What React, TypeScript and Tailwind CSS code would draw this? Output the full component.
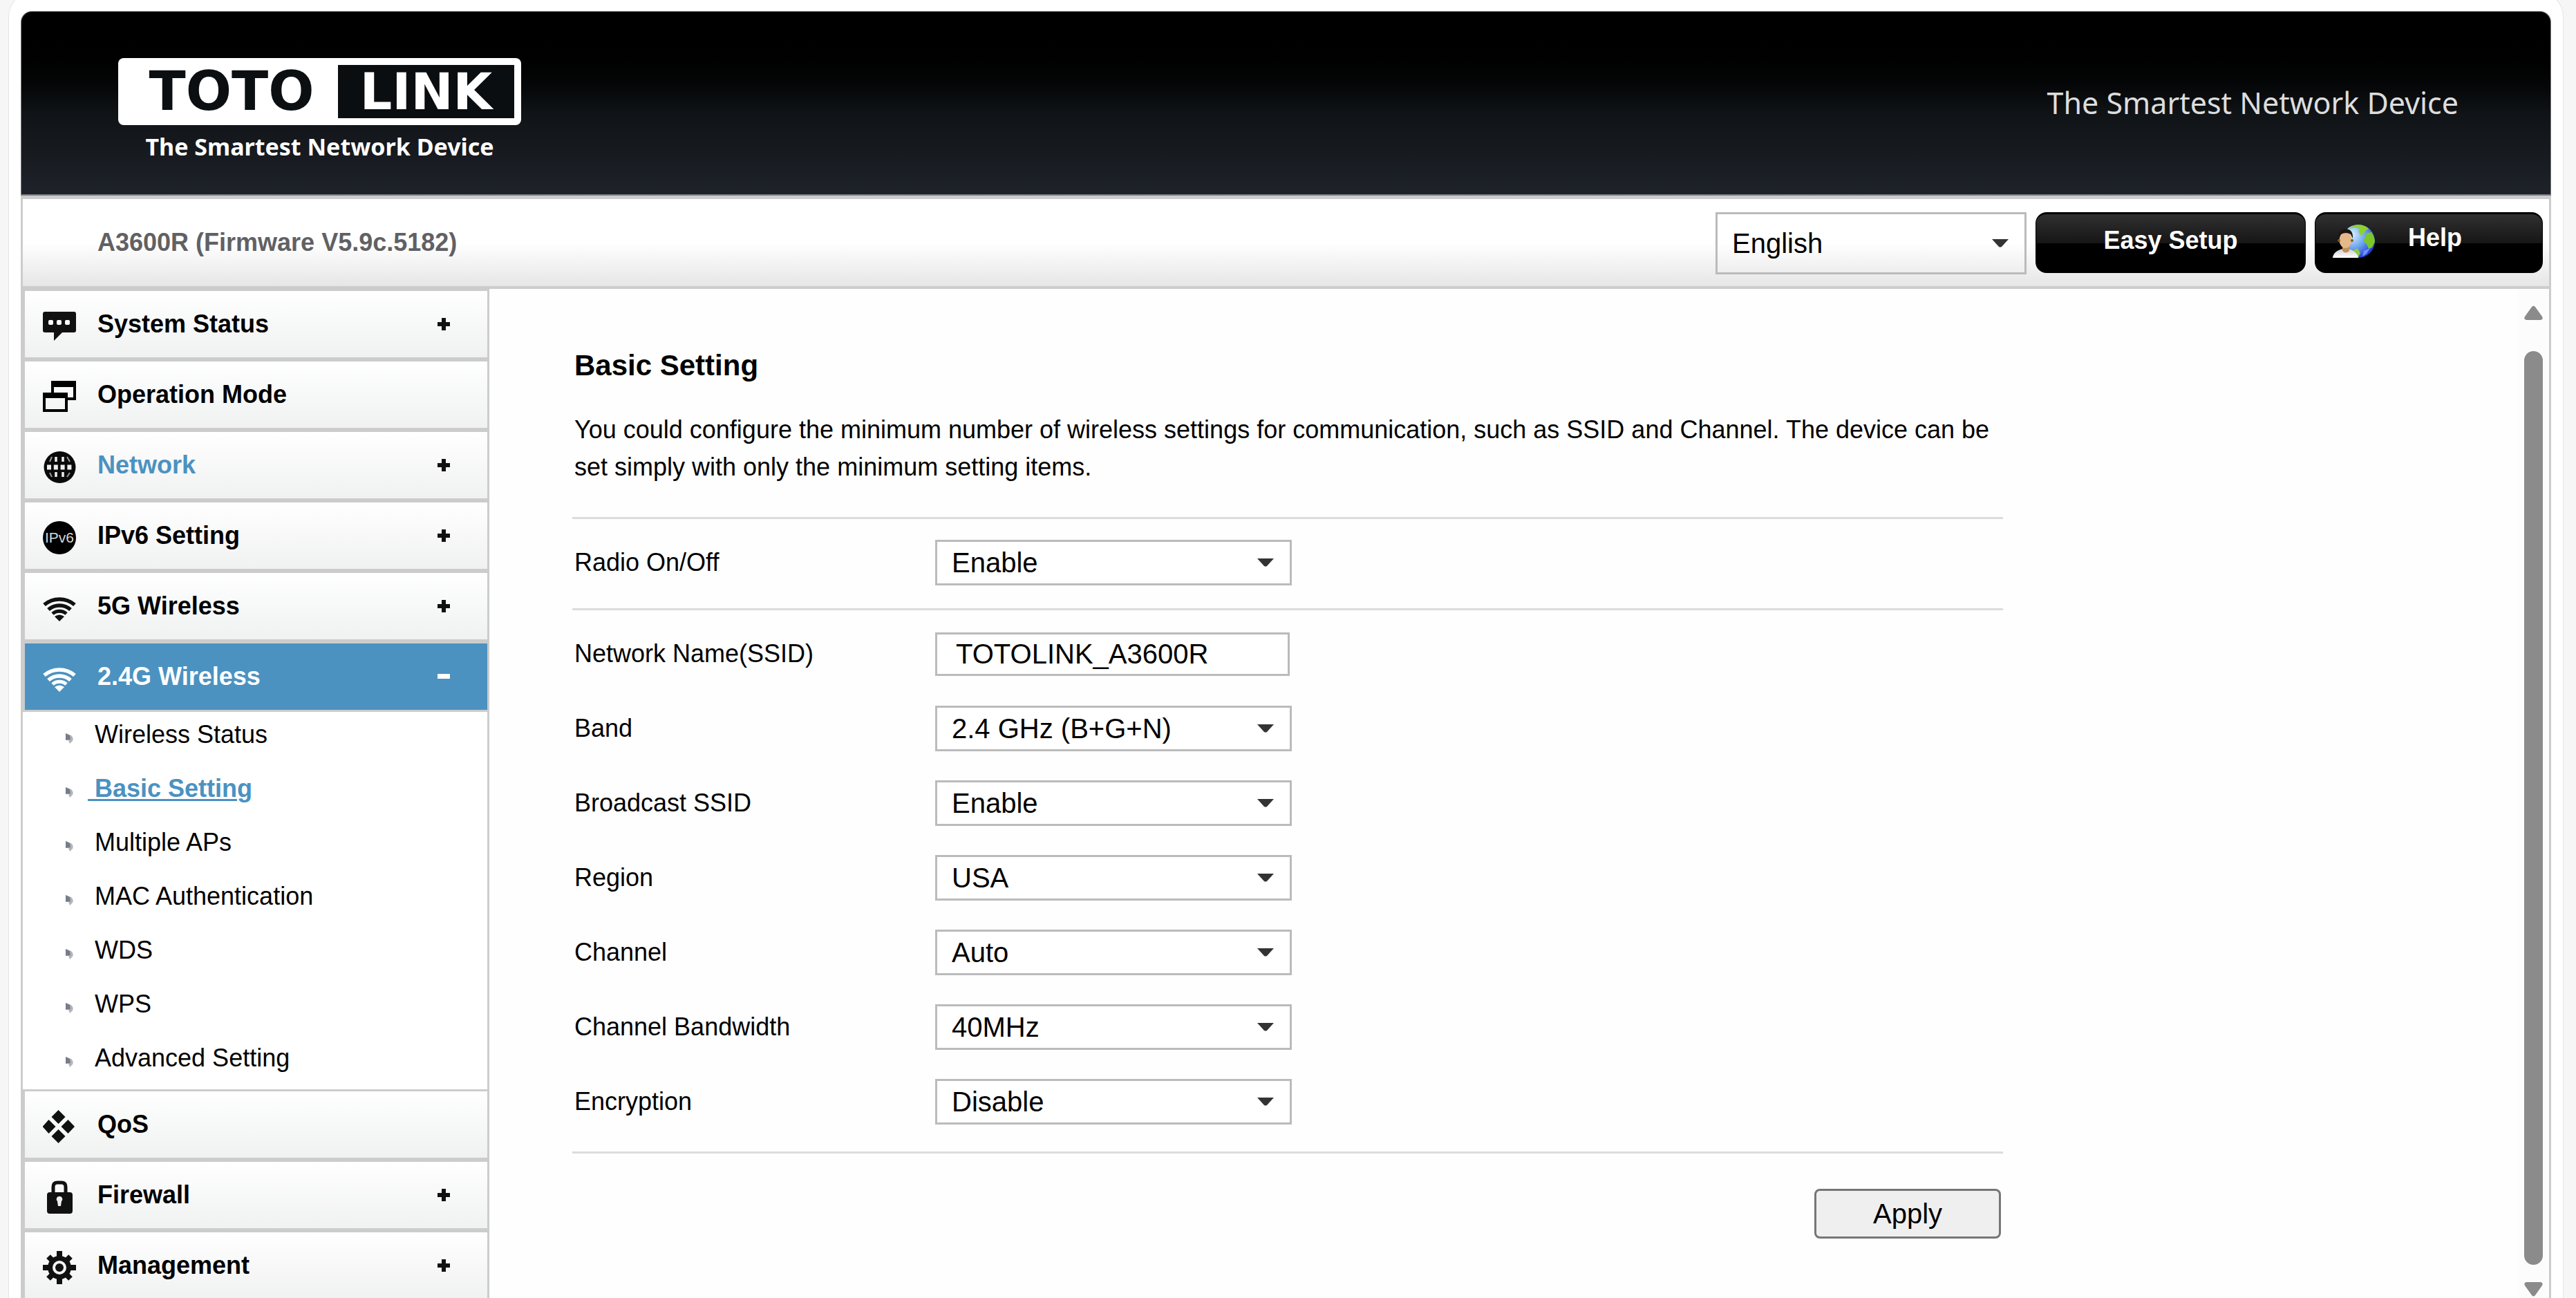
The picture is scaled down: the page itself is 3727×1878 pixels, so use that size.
import React, { useState } from "react";

function ChatIcon() {
  return (
    <svg viewBox="0 0 48 48" className="size-12" aria-hidden="true">
      <path d="M3 3h42q3 0 3 3v24q0 3-3 3H28L16 45V33H3q-3 0-3-3V6q0-3 3-3z" fill="#111" />
      <rect x="8" y="15" width="7" height="7" rx="2" fill="#fff" />
      <rect x="20" y="15" width="7" height="7" rx="2" fill="#fff" />
      <rect x="32" y="15" width="7" height="7" rx="2" fill="#fff" />
    </svg>
  );
}

function WindowsIcon() {
  return (
    <svg viewBox="0 0 48 48" className="size-12" aria-hidden="true">
      <path d="M12 1h36v28H34v-4h10V10H16v9h-4z" fill="#000" />
      <path d="M0 18h36v28H0zM4 26v16h28V26z" fill="#000" fillRule="evenodd" />
    </svg>
  );
}

function GlobeIcon() {
  return (
    <svg viewBox="0 0 48 48" className="size-12" aria-hidden="true">
      <circle cx="24.500" cy="24" r="23" fill="#0a0a0a" />
      <g fill="none" stroke="#eee" strokeWidth="3.500">
        <path d="M6 24h36" strokeWidth="7" strokeDasharray="6 3.800" />
        <path d="M19 9v7M29 9v7M19 31v7M29 31v7" />
        <path d="M13 9l-3 7M35 9l4 7M10 32l3 6M39 32l-4 6" strokeWidth="2" stroke="#999" />
      </g>
    </svg>
  );
}

function Ipv6Icon() {
  return (
    <svg viewBox="0 0 48 48" className="size-12" aria-hidden="true">
      <circle cx="24" cy="24" r="24" fill="#000" />
      <text x="24" y="31" textAnchor="middle" fontFamily="Liberation Sans, sans-serif" fontSize="21" fill="#d8d8d8">
        IPv6
      </text>
    </svg>
  );
}

function WifiIcon({ color = "#111" }: { color?: string }) {
  return (
    <svg viewBox="0 0 48 48" className="size-12" aria-hidden="true">
      <g fill="none" stroke={color} strokeWidth="5.500">
        <path d="M2 19a34 34 0 0 1 44 0" />
        <path d="M8 26a24 24 0 0 1 32 0" />
        <path d="M14 32a15 15 0 0 1 20 0" strokeWidth="5" />
      </g>
      <path d="M17 36q7-5 14 0l-7 7z" fill={color} />
    </svg>
  );
}

function QosIcon() {
  return (
    <svg viewBox="0 0 48 48" className="size-12" aria-hidden="true">
      <path
        d="M22.500 0l10 10-10 10-10-10zM22.500 28l10 10-10 10-10-10zM8.500 14l10 10-10 10-9-10zM36.500 14l9.500 10-9.500 10-10-10z"
        fill="#111"
      />
    </svg>
  );
}

function LockIcon() {
  return (
    <svg viewBox="0 0 48 48" className="size-12" aria-hidden="true">
      <path d="M15 18V9q0-6 6-6h6q6 0 6 6v9" fill="none" stroke="#111" strokeWidth="5" />
      <rect x="6" y="17" width="37" height="31" rx="4" fill="#111" />
      <path d="M24 23a4 4 0 0 1 3 7l-1 7h-4l-1-7a4 4 0 0 1 3-7z" fill="#eee" />
    </svg>
  );
}

function GearIcon() {
  return (
    <svg viewBox="0 0 48 48" className="size-12" aria-hidden="true">
      <g stroke="#111" strokeWidth="8">
        <path d="M24 0v48M0 24h48M8 8l32 32M40 8L8 40" />
      </g>
      <circle cx="24" cy="24" r="17" fill="#111" />
      <circle cx="24" cy="24" r="8" fill="#111" stroke="#f4f4f4" strokeWidth="4" />
    </svg>
  );
}

function SupportIcon() {
  return (
    <svg viewBox="0 0 62 62" className="h-[62px] w-[62px]" aria-hidden="true">
      <defs>
        <radialGradient id="sea" cx="0.3" cy="0.3" r="0.8">
          <stop offset="0" stopColor="#d8f4ff" />
          <stop offset="0.5" stopColor="#6fa6f0" />
          <stop offset="1" stopColor="#1a2fd0" />
        </radialGradient>
        <linearGradient id="shirt" x1="0" y1="0" x2="0" y2="1">
          <stop offset="0" stopColor="#cfcfcf" />
          <stop offset="1" stopColor="#fff" />
        </linearGradient>
      </defs>
      <circle cx="37" cy="36" r="24" fill="url(#sea)" />
      <path d="M24 18q6-6 14-6 9 1 14 6l-4 2-3 5-5 2-3-5 2-4-6-2z" fill="#8fd22e" />
      <path d="M50 24l6-1q5 7 5 14l-4 8-5 2-3-7-5-4 3-7z" fill="#7cc62a" />
      <path d="M28 50l8-4 4 7-3 6-9-2z" fill="#8ccb46" />
      <path d="M45 50l9-4-5 8-6 4z" fill="#6e92ff" />
      <path d="M0 60q1-10 15-13h8q13 4 14 13z" fill="url(#shirt)" />
      <path d="M14 42h10v8q-5 5-10 0z" fill="#c08f5e" />
      <ellipse cx="18.500" cy="34" rx="9" ry="12" fill="#e3b98a" />
      <path d="M9 32q-2-13 10-14 11 1 10 14l-3-6q-7-4-14 0z" fill="#1d1512" />
      <circle cx="9" cy="35" r="2" fill="#8a5a1c" />
      <circle cx="28" cy="35" r="2" fill="#8a5a1c" />
    </svg>
  );
}

function Caret() {
  return (
    <svg
      viewBox="0 0 24 12"
      className="pointer-events-none absolute top-1/2 right-[26px] h-3 w-6 -translate-y-1/2"
      aria-hidden="true"
    >
      <path d="M0 0h24L14 11q-2 1-4 0z" fill="#333" />
    </svg>
  );
}

function SubBullet() {
  return (
    <svg viewBox="0 0 12 15" className="mt-[10px] h-[15px] w-3" aria-hidden="true">
      <path d="M0 0l8 3q4 4 2 8l-4 4-2-5-4-1z" fill="#b4b5ba" />
      <path d="M0 0l6 3 1 6-7 1z" fill="#777c8a" />
    </svg>
  );
}

type Section = { name: string; icon: React.ReactNode; expandable?: boolean; highlighted?: boolean };

const topSections: Section[] = [
  { name: "System Status", icon: <ChatIcon />, expandable: true },
  { name: "Operation Mode", icon: <WindowsIcon /> },
  { name: "Network", icon: <GlobeIcon />, expandable: true, highlighted: true },
  { name: "IPv6 Setting", icon: <Ipv6Icon />, expandable: true },
  { name: "5G Wireless", icon: <WifiIcon />, expandable: true },
];

const bottomSections: Section[] = [
  { name: "QoS", icon: <QosIcon /> },
  { name: "Firewall", icon: <LockIcon />, expandable: true },
  { name: "Management", icon: <GearIcon />, expandable: true },
];

const wirelessPages = [
  "Wireless Status",
  "Basic Setting",
  "Multiple APs",
  "MAC Authentication",
  "WDS",
  "WPS",
  "Advanced Setting",
];

function SectionButton({ section }: { section: Section }) {
  return (
    <button
      type="button"
      className="flex h-[102px] w-full shrink-0 items-center border-y-3 border-l-3 border-[#ccc] bg-linear-to-b from-white to-[#f0f1f1] pr-[54px] pl-[26px] text-left"
    >
      <span className="pt-[6px]">{section.icon}</span>
      <span className={section.highlighted ? "ml-[31px] flex-1 font-bold text-[#4b92c1]" : "ml-[31px] flex-1 font-bold"}>
        {section.name}
      </span>
      {section.expandable && (
        <svg viewBox="0 0 18 18" className="size-[18px]" aria-hidden="true">
          <path d="M6 0h6v6h6v6h-6v6H6v-6H0V6h6z" fill="#111" />
        </svg>
      )}
    </button>
  );
}

function Sidebar() {
  return (
    <nav className="flex w-[675px] shrink-0 flex-col overflow-hidden border-r-3 border-[#ccc] bg-white">
      {topSections.map((s) => (
        <SectionButton key={s.name} section={s} />
      ))}
      <button
        type="button"
        aria-expanded="true"
        className="flex h-[102px] w-full shrink-0 items-center border-y-3 border-l-3 border-[#ccc] bg-[#4b92c1] pr-[54px] pl-[26px] text-left text-white"
      >
        <span className="pt-[6px]">
          <WifiIcon color="#fff" />
        </span>
        <span className="ml-[31px] flex-1 font-bold">2.4G Wireless</span>
        <svg viewBox="0 0 18 18" className="size-[18px]" aria-hidden="true">
          <path d="M0 5h18v7H0z" fill="#fff" />
        </svg>
      </button>
      <ul className="shrink-0">
        {wirelessPages.map((page) => (
          <li key={page} className="flex h-[78px] items-center gap-5 pb-3 pl-[62px]">
            <SubBullet />
            <a
              href="#"
              className={
                page === "Basic Setting"
                  ? "font-bold text-[#4b92c1] underline decoration-3 underline-offset-3"
                  : ""
              }
            >
              {"\u00a0" + page}
            </a>
          </li>
        ))}
      </ul>
      {bottomSections.map((s) => (
        <SectionButton key={s.name} section={s} />
      ))}
    </nav>
  );
}

function SelectField({ id, label, options }: { id: string; label: string; options: string[] }) {
  return (
    <div className="grid h-[108px] grid-cols-[525px_1fr] items-center">
      <label htmlFor={id} className="pl-[3px]">
        {label}
      </label>
      <div className="relative w-[516px]">
        <select
          id={id}
          className="h-[66px] w-full appearance-none border-3 border-[#bbb] bg-white pl-[21px] text-[40px] leading-[60px]"
        >
          {options.map((o) => (
            <option key={o}>{o}</option>
          ))}
        </select>
        <Caret />
      </div>
    </div>
  );
}

function BasicSetting() {
  const [ssid, setSsid] = useState("TOTOLINK_A3600R");
  return (
    <main className="min-w-0 flex-1 pt-[84px] pl-[120px]">
      <form className="w-full max-w-[2070px]" onSubmit={(e) => e.preventDefault()}>
        <h1 className="pl-[3px] text-[42px] leading-[54px] font-bold">Basic Setting</h1>
        <p className="mt-[39px] pl-[3px] leading-[54px]">
          You could configure the minimum number of wireless settings for communication, such as SSID and Channel. The
          device can be set simply with only the minimum setting items.
        </p>
        <div className="mt-[45px] border-t-3 border-[#dcdcdc] pt-[9px] pb-3">
          <SelectField id="radio" label="Radio On/Off" options={["Enable", "Disable"]} />
        </div>
        <div className="border-y-3 border-[#dcdcdc] pt-[9px] pb-[18px]">
          <div className="grid h-[108px] grid-cols-[525px_1fr] items-center">
            <label htmlFor="ssid" className="pl-[3px]">
              Network Name(SSID)
            </label>
            <input
              id="ssid"
              type="text"
              value={ssid}
              onChange={(e) => setSsid(e.target.value)}
              className="h-[63px] w-[513px] border-3 border-[#bbb] bg-white pl-[27px] text-[40px]"
            />
          </div>
          <SelectField id="band" label="Band" options={["2.4 GHz (B+G+N)", "2.4 GHz (B+G)"]} />
          <SelectField id="broadcast" label="Broadcast SSID" options={["Enable", "Disable"]} />
          <SelectField id="region" label="Region" options={["USA", "Europe"]} />
          <SelectField id="channel" label="Channel" options={["Auto", "1", "6", "11"]} />
          <SelectField id="bandwidth" label="Channel Bandwidth" options={["40MHz", "20MHz"]} />
          <SelectField id="encryption" label="Encryption" options={["Disable", "WPA2-PSK"]} />
        </div>
        <div className="mt-[51px] flex justify-end pr-[3px]">
          <button type="submit" className="h-[72px] w-[270px] rounded-lg border-3 border-[#767676] bg-[#efefef] text-[40px]">
            Apply
          </button>
        </div>
      </form>
    </main>
  );
}

function Header() {
  return (
    <header className="flex h-[267px] shrink-0 items-center justify-between rounded-t-2xl border border-b-2 border-[#777b7e] bg-linear-to-b from-black from-10% via-[#101316] via-55% to-[#1e222a] pr-[133px] pl-[140px] font-['Noto_Sans',sans-serif] text-white">
      <div className="mt-[24px] flex flex-col items-center">
        <div className="flex h-[97px] w-[583px] rounded-lg bg-white p-[10px] font-['DejaVu_Sans',sans-serif] leading-[77px] font-bold">
          <span className="flex-1 text-center text-[78px] text-[#0c0f12]">TOTO</span>
          <span className="w-[255px] bg-[#0b0e11] text-center text-[73px]">LINK</span>
        </div>
        <span className="mt-1 text-[34px] leading-[54px] font-bold">The Smartest Network Device</span>
      </div>
      <span className="text-[43px] leading-[60px] text-[#ddd]">The Smartest Network Device</span>
    </header>
  );
}

function TitleBar() {
  const glossy =
    "h-[88px] rounded-2xl border border-t-3 border-black bg-linear-to-b from-[#303030] from-0% via-[#161616] via-50% to-black to-50% text-white font-bold";
  return (
    <div className="flex h-[135px] shrink-0 items-start border-x-3 border-t-5 border-b-4 border-[#ccc] bg-linear-to-b from-white from-50% to-[#e6e6e6] pt-[19px] pr-[9px] pl-[108px]">
      <span className="flex-1 leading-[88px] font-bold text-[#606164]">A3600R (Firmware V5.9c.5182)</span>
      <div className="relative w-[450px]">
        <select
          aria-label="Language"
          className="h-[90px] w-full appearance-none border-3 border-[#bbb] bg-transparent pl-[21px] text-[40px] leading-[84px]"
        >
          <option>English</option>
        </select>
        <Caret />
      </div>
      <button type="button" className={glossy + " ml-[13px] w-[391px] pb-[8px]"}>
        Easy Setup
      </button>
      <button type="button" className={glossy + " ml-[13px] flex w-[330px] items-center pb-[16px] pl-[25px]"}>
        <SupportIcon />
        <span className="ml-[47px]">Help</span>
      </button>
    </div>
  );
}

function ScrollLane() {
  return (
    <div className="flex w-[45px] flex-col items-center bg-[#fcfcfc] pt-6 pb-[2px]" aria-hidden="true">
      <svg viewBox="0 0 27 21" className="h-[21px] w-[27px]">
        <path d="M11 2q2.500-3 5 0l10 14q2 4-2 5H3q-4-1-2-5z" fill="#8b8b8b" />
      </svg>
      <div className="mt-[45px] w-[27px] flex-1 rounded-full bg-[#8b8b8b]" />
      <svg viewBox="0 0 27 21" className="mt-[25px] h-[21px] w-[27px]">
        <path d="M11 19q2.500 3 5 0l10-14q2-4-2-5H3q-4 1-2 5z" fill="#8b8b8b" />
      </svg>
    </div>
  );
}

export default function App() {
  return (
    <div className="flex h-screen flex-col overflow-hidden bg-[#f6f6f6] pr-[18px] pl-3 font-['Liberation_Sans',Arial,sans-serif] text-[36px] leading-[54px] text-black">
      <div className="-mt-3 flex min-h-0 flex-1 flex-col rounded-t-[36px] border border-b-0 border-[#e5e5e5] bg-white px-[17px] pt-[27px]">
        <Header />
        <TitleBar />
        <div className="flex min-h-0 flex-1 border-x-3 border-[#ccc] bg-[#fefefe]">
          <Sidebar />
          <BasicSetting />
          <ScrollLane />
        </div>
      </div>
    </div>
  );
}
